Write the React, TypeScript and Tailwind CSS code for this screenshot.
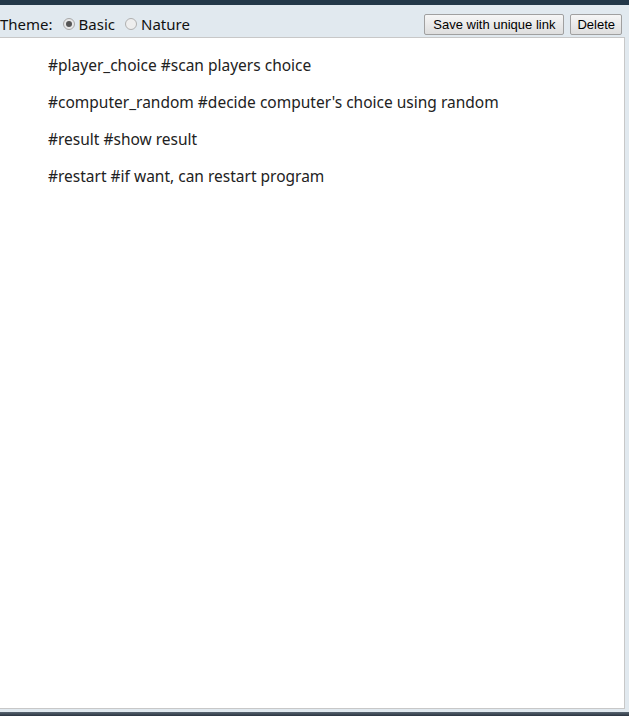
export default function App() {
  const lines = [
    "#player_choice #scan players choice",
    "#computer_random #decide computer's choice using random",
    "#result #show result",
    "#restart #if want, can restart program",
  ];
  return (
    <div className="w-[629px] h-[716px] flex flex-col bg-[#e1e9ef] overflow-hidden" style={{ fontFamily: '"Noto Sans", "Open Sans", sans-serif' }}>
      <div className="h-[5px] bg-[#233849] shrink-0" />
      <div className="h-[32px] shrink-0 flex items-end pb-[2px] pr-[7px]">
        <div className="flex items-center text-[15px] text-[#111] leading-none h-[22px]">
          <span>Theme:</span>
          <span className="ml-[10px] w-[12px] h-[12px] rounded-full border border-[#a8a8a8] bg-[#e8e8e8] flex items-center justify-center">
            <span className="w-[6px] h-[6px] rounded-full bg-[#555]" />
          </span>
          <span className="ml-[4px]">Basic</span>
          <span className="ml-[10px] w-[12px] h-[12px] rounded-full border border-[#b0b0b0] bg-[#eee]" />
          <span className="ml-[4px]">Nature</span>
        </div>
        <div className="ml-auto flex gap-[6px]" style={{ fontFamily: '"Liberation Sans", Arial, sans-serif' }}>
          <button className="h-[21px] px-[8px] text-[13px] leading-none text-black border border-[#a0a0a0] rounded-[2px] bg-gradient-to-b from-[#f6f6f6] to-[#dedede]">Save with unique link</button>
          <button className="h-[21px] px-[6px] text-[13px] leading-none text-black border border-[#a0a0a0] rounded-[2px] bg-gradient-to-b from-[#f6f6f6] to-[#dedede]">Delete</button>
        </div>
      </div>
      <div className="flex-1 flex pr-[4px] pb-[3px]">
        <div className="flex-1 bg-white border-t border-r border-b border-[#c8c8c8] pl-[48px] pt-[16px] flex flex-col gap-[15px] text-[15.5px] leading-[22px] text-[#222]">
          {lines.map((l) => (
            <div key={l}>{l}</div>
          ))}
        </div>
      </div>
      <div className="h-[4px] shrink-0 bg-gradient-to-b from-[#5a6672] to-[#2a3440]" />
    </div>
  );
}
